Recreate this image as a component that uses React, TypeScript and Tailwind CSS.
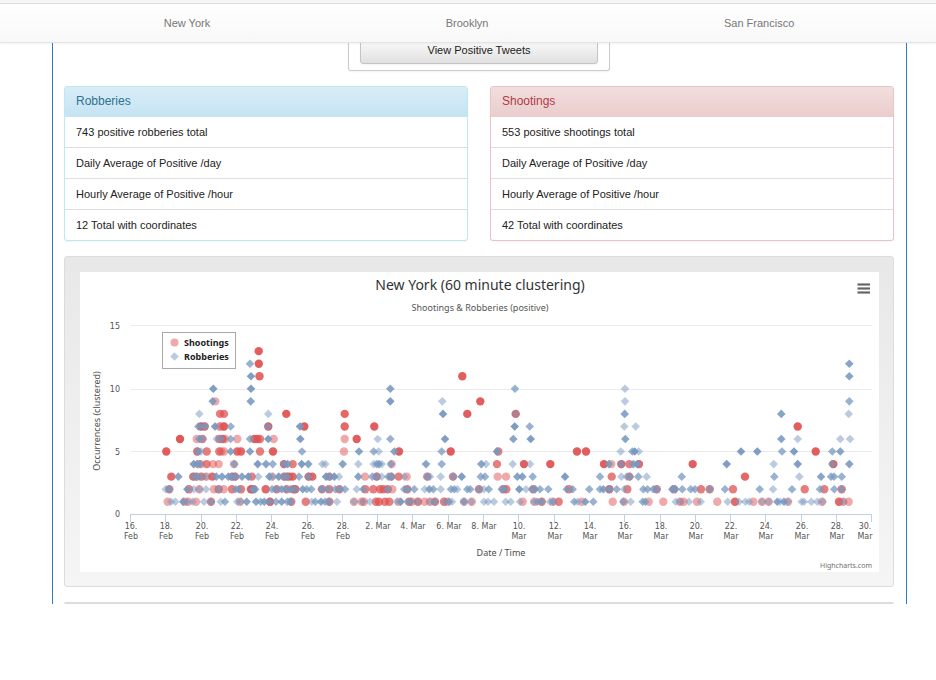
type Row = [occurrences: number, points: string];

// Each point is "x:n": horizontal position and number of stacked clusters.
const shootings: Row[] = [
  [13, '258.7:4'],
  [12, '258.8:4'],
  [11, '259.5:3 462.3:4'],
  [9, '215.3:1 480.3:4'],
  [8, '220:2 224:2 286.3:4 344.7:3 467.3:4 515.7:3'],
  [7, '201:4 204.7:3 219.3:1 221:1 224:4 268.3:4 304.3:4 344.7:3 374.3:4 797.7:4'],
  [6, '180:5 196.7:1 202.3:2 219.3:2 222.7:3 225.3:1 237.3:1 254.3:3 257.3:3 260:2 273.7:1 344.7:1 356.7:4'],
  [5, '166.3:4 197.3:3 206.7:2 219.3:2 221.3:1 224:1 237.3:3 241:3 260:2 273:4 344:1 399:4 450.7:4 498.3:2 577:4 586:4 815.7:4'],
  [4, '198.3:1 201:1 206.7:2 213:1 218.7:1 234:1 284:3 292.7:2 391.7:1 497:2 524:4 550.3:4 604:4 611.3:1 621.3:4 629.3:2 639:3 692.7:4 833.3:4'],
  [3, '171.3:3 193.3:3 196.7:2 201.7:2 206.3:1 212.3:3 232:2 235:3 251.7:2 272:1 284:2 286.7:2 289.3:3 292.7:3 308.7:4 312.3:3 329.3:2 365:1 376.7:3 391:2 398.7:2 406.7:1 427.3:2 453:2 497.7:1 506:1 611.7:2 629.3:2 745:3'],
  [2, '169.3:2 189:2 199.3:1 214:1 218.7:2 223.7:1 232:2 241:2 251:4 253.3:3 265.7:3 276.7:2 286.7:2 293.3:2 295.3:3 322:2 329.3:2 339.3:2 365.3:2 373.3:2 380:2 383.3:2 387.7:2 392.3:1 407.3:2 479:2 503.3:2 506.3:2 533.3:2 569:2 609.3:3 627.3:2 656.7:2 674:2 701:2 709.7:2 733:2 804.7:2 824.3:2 841.7:2'],
  [1, '167.7:1 184.3:1 188.3:1 196:1 211:2 240:1 270:4 291.3:2 305.7:2 329.3:2 354:1 361.7:1 364:1 376:2 379:2 385:2 389.3:2 399:1 409.3:2 412:1 418:2 424.7:1 430:1 435:2 444:2 447.7:1 464:1 471.7:1 522.7:1 534.3:1 541.7:2 552.7:1 558.7:2 581.7:1 612.7:1 624:1 648.7:1 663.3:1 680:1 683.7:1 697:1 717.3:1 735:3 753.3:1 762:1 768.7:1 788:1 822:1 839:3 843.3:1 848.7:1'],
];

const robberies: Row[] = [
  [12, '250:2 849.3:3'],
  [11, '251:4 849.3:3'],
  [10, '213.3:4 251:4 390.3:3 515:2 625:1'],
  [9, '212.7:3 250.7:3 390.3:4 442.3:1 625:1 849.3:2'],
  [8, '199.3:1 268.3:1 443:4 515.7:1 624.7:3 781.3:3 848.7:1'],
  [7, '198.3:2 201:1 204.7:3 215:4 230.7:2 268:2 300:4 514.7:5 529.7:2 624.3:1 635.7:1'],
  [6, '199.3:3 203.3:1 216.7:1 220.7:2 230.7:2 250:2 268.3:4 300.3:4 377.7:1 390.3:2 445:4 513.3:3 530.7:4 625.3:3 781.3:3 797.7:1 840.3:1 850:1'],
  [5, '198:3 201:1 230.7:3 250:3 302:2 359:3 373.7:2 378.7:1 394.3:3 441.7:2 497:4 620.7:1 632.3:2 634.7:4 638.7:1 741:4 757.3:4 782:2 794:4 832.3:2 840.3:3'],
  [4, '193.7:4 197.3:2 200.3:2 234.3:2 257.7:4 266:3 272.7:2 284:2 287.7:3 301.7:4 308.3:3 322.3:1 325.3:1 342.7:3 358.3:1 373.7:1 376.7:2 379:3 381.7:1 391:2 426:3 441.7:2 481.3:3 486:1 512.7:1 530:1 609:3 621.3:2 633.3:3 637.3:3 726.7:4 773.7:1 797.7:4 832.3:2 849.3:3'],
  [3, '178.3:3 193.3:1 196:2 200:2 206:1 216.3:3 222:3 228.3:3 232:2 235.3:3 242:3 248.3:4 258.3:1 269.3:3 272.7:1 278.7:4 284:2 287.3:2 299:2 308.3:2 326:4 330:2 334.3:4 339:1 358.3:3 372.3:2 376.7:2 381.7:1 388.3:2 391.7:3 404.3:1 427.3:2 430:1 440.7:1 453.3:2 461.7:4 480.7:2 485:2 517.3:3 522.3:3 532.7:2 565:4 600:2 621.3:1 626.7:1 630:2 638.3:2 646.7:1 681.7:2 774.3:2 799.3:1 821:3 831:2 834:2 841.7:2'],
  [2, '165.7:1 169:3 187.3:3 194:1 199.3:1 206:1 218.7:2 235.7:2 238.7:2 253:4 255.3:2 272:2 276:2 281.7:3 286:2 290.7:3 295:2 302.7:3 306.7:2 311.3:2 321.7:3 327.3:2 335.3:2 340:2 345:2 356.7:1 363.3:2 387.7:2 404.3:2 407.7:2 414.3:2 424.7:1 429.3:3 433.3:2 440.7:1 451:2 454.3:2 457.3:1 467.3:2 470.3:2 479:2 484:1 488.7:2 501.7:2 504:3 519.3:4 526:1 532:2 535:2 540:2 548.3:2 566.7:2 572.7:2 589.3:2 600:2 603.3:3 609.3:3 616.7:2 624.3:1 643.3:2 647.5:2 653.3:2 656.7:2 672.3:3 675.3:3 682.3:2 690.7:2 695:2 709.7:2 725:2 759.7:2 773:1 792:2 820:2 834.3:2 841.7:2'],
  [1, '171:1 175.3:1 183.3:3 187.3:1 192.7:1 204:1 211:2 220.7:1 225:2 237.3:1 240.7:1 246.7:3 256:3 260.7:2 264.3:3 269.3:2 276:2 281.7:3 287.3:2 290.7:3 311.7:1 315.3:2 321:3 325:2 329:2 337:1 354:1 362.7:1 370:1 396.7:1 400.7:3 407.3:1 410.7:2 418:1 430:1 435:2 445:1 449:2 452:1 464:3 471.5:1 484:1 488:1 494:1 505.7:1 510.7:1 520:1 534:1 537.3:2 541.7:2 550:1 553.3:2 574.3:2 577.7:1 585.3:3 593.3:2 623.3:2 630.7:1 642.7:2 645.3:2 675.7:1 680:1 689:1 700.7:1 727.7:1 739:1 745.3:1 749.3:1 762:1 768.7:1 777.3:3 780:1 784:3 788:1 801.7:1 804:1 811.3:1 817.3:1 822.7:1 843.3:1'],
];

const ticks = [
  '16. Feb', '18. Feb', '20. Feb', '22. Feb', '24. Feb', '26. Feb', '28. Feb',
  '2. Mar', '4. Mar', '6. Mar', '8. Mar', '10. Mar', '12. Mar', '14. Mar', '16. Mar',
  '18. Mar', '20. Mar', '22. Mar', '24. Mar', '26. Mar', '28. Mar', '30. Mar',
];

const yOf = (value: number) => 514.3 - value * 12.55;

function expand(rows: Row[]) {
  return rows.flatMap(([value, points]) =>
    points.split(' ').map((point) => {
      const [x, n] = point.split(':').map(Number);
      return { x, y: yOf(value), opacity: 1 - Math.pow(0.5, n) };
    }),
  );
}

function Diamond({ x, y, opacity }: { x: number; y: number; opacity: number }) {
  return <path d={`M${x} ${y - 4.3}l4.3 4.3l-4.3 4.3l-4.3 -4.3z`} fill="#7798bf" fillOpacity={opacity} />;
}

function Chart() {
  return (
    <svg
      viewBox="80 272 799 300"
      className="block h-auto w-full bg-white font-['Noto_Sans',sans-serif]"
      role="img"
      aria-label="New York shootings and robberies"
    >
      <text x="480" y="290" textAnchor="middle" className="fill-[#333333] text-[14px]">
        New York (60 minute clustering)
      </text>
      <text x="480" y="311" textAnchor="middle" className="fill-[#555555] text-[9px]">
        Shootings &amp; Robberies (positive)
      </text>
      {[284.5, 288.5, 292.5].map((y) => (
        <path key={y} d={`M857.5 ${y}H870`} stroke="#666666" strokeWidth="2.2" />
      ))}

      {[325.5, 389.5, 451.5].map((y) => (
        <path key={y} d={`M131 ${y}H872`} stroke="#ebebeb" />
      ))}
      <path d="M130 514.5H872" stroke="#c0d0e0" />
      {ticks.map((tick, i) => {
        const x = Math.round(130 + i * 35.3) + 0.5;
        const [day, month] = tick.split(' ');
        const last = i === ticks.length - 1;
        const oneLine = i >= 7 && i <= 10;
        const labelX = last ? 865 : x + 0.5;
        return (
          <g key={tick} textAnchor="middle" className="fill-[#555555] font-['DejaVu_Sans',sans-serif] text-[8px]">
            <path d={`M${x} 514V522`} stroke="#c0d0e0" />
            {oneLine ? (
              <text x={labelX} y="529">{tick}</text>
            ) : (
              <>
                <text x={labelX} y="529">{day}</text>
                <text x={labelX} y="539">{month}</text>
              </>
            )}
          </g>
        );
      })}
      {[0, 5, 10, 15].map((v) => (
        <text
          key={v}
          x="120"
          y={Math.round(yOf(v)) + 3}
          textAnchor="end"
          className="fill-[#555555] font-['DejaVu_Sans',sans-serif] text-[8px]"
        >
          {v}
        </text>
      ))}
      <text transform="translate(100 421) rotate(-90)" textAnchor="middle" className="fill-[#4d4d4d] text-[9px]">
        Occurrences (clustered)
      </text>
      <text x="501" y="556" textAnchor="middle" className="fill-[#4d4d4d] text-[9px]">
        Date / Time
      </text>

      {expand(shootings).map((p, i) => (
        <circle key={i} cx={p.x} cy={p.y} r="4.2" fill="#df5353" fillOpacity={p.opacity} />
      ))}
      {expand(robberies).map((p, i) => (
        <Diamond key={i} {...p} />
      ))}

      <rect x="162.5" y="332.5" width="73" height="36" fill="#ffffff" stroke="#a8a8a8" />
      <circle cx="174.5" cy="342.5" r="4" fill="#df5353" fillOpacity="0.5" />
      <Diamond x={174.5} y={356.5} opacity={0.5} />
      <g className="fill-[#222222] text-[9px] font-bold">
        <text x="184" y="346">Shootings</text>
        <text x="184" y="360">Robberies</text>
      </g>
      <text x="872" y="568" textAnchor="end" className="fill-[#707070] text-[7px]">
        Highcharts.com
      </text>
    </svg>
  );
}

interface PanelProps {
  title: string;
  rows: string[];
  border: string;
  heading: string;
}

function Panel({ title, rows, border, heading }: PanelProps) {
  return (
    <section className={`flex-1 rounded-[3px] border bg-white shadow-xs ${border}`}>
      <h2 className={`flex h-[30px] items-center px-[11px] pb-[2px] text-[12px] ${heading}`}>{title}</h2>
      <ul className="divide-y divide-[#dddddd]">
        {rows.map((row) => (
          <li key={row} className="flex h-[31px] items-center px-[11px] text-[11px] last:h-[30px]">
            {row}
          </li>
        ))}
      </ul>
    </section>
  );
}

export default function App() {
  return (
    <div className="min-h-screen bg-white font-['Liberation_Sans',Arial,sans-serif] text-[#222222]">
      <header className="sticky top-0 z-10 border-b border-[#e4e4e4] bg-[#f6f6f6] pt-[3px] shadow-xs">
        <nav className="flex h-[39px] items-center border-t border-[#dddddd] bg-linear-to-b from-white to-[#f8f8f8] pr-6 pl-[46px] text-[11px] text-[#777777]">
          <a href="#new-york" className="flex-auto text-center">New York</a>
          <a href="#brooklyn" className="flex-auto text-center">Brooklyn</a>
          <a href="#san-francisco" className="flex-auto text-center">San Francisco</a>
        </nav>
      </header>

      <main className="-mt-[7px] mr-[29px] ml-[52px] border-x border-[#337ab7] pr-3 pl-[11px]">
        <div className="mx-auto w-[262px] rounded-b-[3px] border border-t-0 border-[#cccccc] px-[11px] pb-[6px] shadow-xs">
          <button
            type="button"
            className="block h-7 w-full rounded-[3px] border border-[#c4c4c4] bg-linear-to-b from-white to-[#e0e0e0] text-[11px] text-[#222222] shadow-xs"
          >
            View Positive Tweets
          </button>
        </div>

        <div className="mt-[15px] flex gap-[22px]">
          <Panel
            title="Robberies"
            border="border-[#bce8f1]"
            heading="text-[#31708f] bg-linear-to-b from-[#d9edf7] to-[#c4e3f3]"
            rows={['743 positive robberies total', 'Daily Average of Positive /day', 'Hourly Average of Positive /hour', '12 Total with coordinates']}
          />
          <Panel
            title="Shootings"
            border="border-[#e8c4c8]"
            heading="text-[#b03a48] bg-linear-to-b from-[#f2dede] to-[#ebcccc]"
            rows={['553 positive shootings total', 'Daily Average of Positive /day', 'Hourly Average of Positive /hour', '42 Total with coordinates']}
          />
        </div>

        <div className="mt-[15px] rounded-[3px] border border-[#dcdcdc] bg-linear-to-b from-[#e8e8e8] to-[#f5f5f5] pt-[15px] pr-[14px] pb-[14px] pl-[15px]">
          <Chart />
        </div>
        <div className="mt-[15px] h-[2px] rounded-t-[3px] bg-[#dcdcdc]" />
      </main>
    </div>
  );
}
